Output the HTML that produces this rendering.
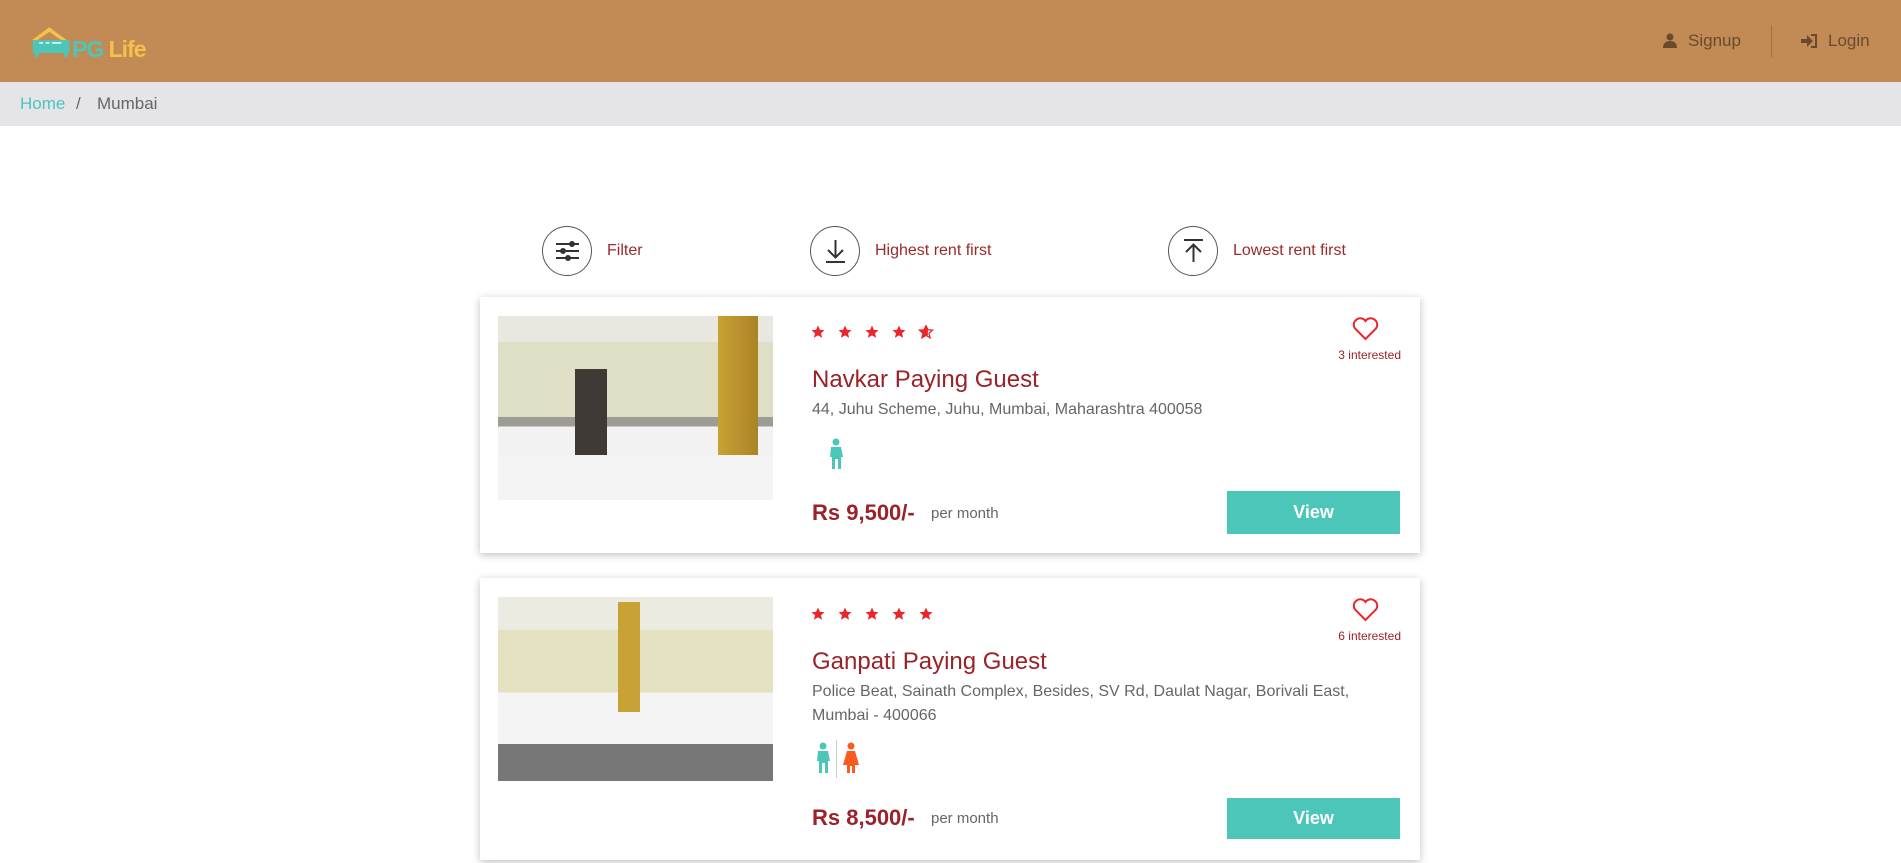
<!DOCTYPE html>
<html><head><meta charset="utf-8">
<style>
*{box-sizing:border-box;margin:0;padding:0}
body{width:1901px;height:863px;overflow:hidden;background:#fff;font-family:"Liberation Sans",sans-serif;position:relative}
.abs{position:absolute}
.hdr{left:0;top:0;width:1901px;height:82px;background:#c28a55}
.bc{left:0;top:82px;width:1901px;height:44px;background:#e5e4e9;font-size:17px;color:#666}
.nav{font-size:17px;color:#6a4a2e}
.sort{font-size:16px;color:#9a2a2a}
.circ{width:50px;height:50px;border:1px solid #555;border-radius:50%}
.card{left:480px;width:940px;background:#fff;box-shadow:0 2px 8px rgba(0,0,0,.25)}
.title{font-size:24px;color:#9a2228}
.addr{font-size:16px;color:#666;line-height:24px}
.price{font-size:22px;font-weight:bold;color:#9a2228}
.pm{font-size:15px;color:#666}
.btn{background:#4bc6b9;color:#fff;font-weight:bold;font-size:18px;text-align:center}
.int{font-size:12px;color:#9a2228}
</style></head><body>
<svg width="0" height="0" style="position:absolute"><defs>
<path id="st" d="M7 0.5l1.9 4.3 4.6.4-3.5 3 1.1 4.6L7 10.4 2.9 12.8 4 8.2.5 5.2l4.6-.4z"/>
</defs></svg>
<div class="abs hdr"></div>
<svg class="abs" style="left:30px;top:24px" width="46" height="36" viewBox="0 0 50 36">
<path d="M2 16 L21 2 L40 16 L34 16 L21 7 L8 16Z" fill="#f6c04a"/>
<rect x="3" y="16" width="40" height="14" rx="2" fill="#4bc6b9"/>
<rect x="5" y="28" width="4" height="6" fill="#4bc6b9"/><rect x="37" y="28" width="4" height="6" fill="#4bc6b9"/>
<path d="M10 19h4M17 19h4M24 19h10" stroke="#fff" stroke-width="1.5"/>
</svg>
<div class="abs" style="left:72px;top:36px;font-size:23px;font-weight:bold;letter-spacing:-1px"><span style="color:#4bc6b9">PG</span> <span style="color:#f6c04a">Life</span></div>
<svg class="abs" style="left:1663px;top:33px" width="14" height="15" viewBox="0 0 14 15"><circle cx="7" cy="4" r="3.5" fill="#6a4a2e"/><path d="M0 15c0-5 3-7 7-7s7 2 7 7z" fill="#6a4a2e"/></svg>
<div class="abs nav" style="left:1688px;top:31px">Signup</div>
<div class="abs" style="left:1771px;top:25px;width:1px;height:32px;background:#9c7048"></div>
<svg class="abs" style="left:1801px;top:34px" width="16" height="14" viewBox="0 0 16 14"><path d="M0 5h6V1l6 6-6 6V9H0z" fill="#6a4a2e"/><path d="M10 1h5v12h-5" stroke="#6a4a2e" stroke-width="2" fill="none"/></svg>
<div class="abs nav" style="left:1828px;top:31px">Login</div>
<div class="abs bc"><span class="abs" style="left:20px;top:12px;color:#4bc6b9">Home</span><span class="abs" style="left:76px;top:12px">/</span><span class="abs" style="left:97px;top:12px">Mumbai</span></div>

<div class="abs circ" style="left:542px;top:226px"></div>
<svg class="abs" style="left:555px;top:239px" width="25" height="24" viewBox="0 0 25 24" stroke="#333" stroke-width="2"><path d="M1 5h23M1 12h23M1 19h23"/><circle cx="17" cy="5" r="2" fill="#333"/><circle cx="8" cy="12" r="2" fill="#333"/><circle cx="13" cy="19" r="2" fill="#333"/></svg>
<div class="abs sort" style="left:607px;top:242px">Filter</div>
<div class="abs circ" style="left:810px;top:226px"></div>
<svg class="abs" style="left:823px;top:238px" width="25" height="26" viewBox="0 0 25 26" stroke="#333" stroke-width="2" fill="none"><path d="M12.5 2v17M5 12l7.5 7.5L20 12M3 24h19"/></svg>
<div class="abs sort" style="left:875px;top:242px">Highest rent first</div>
<div class="abs circ" style="left:1168px;top:226px"></div>
<svg class="abs" style="left:1181px;top:238px" width="25" height="26" viewBox="0 0 25 26" stroke="#333" stroke-width="2" fill="none"><path d="M3 2h19M12.5 7v17M5 14l7.5-7.5L20 14"/></svg>
<div class="abs sort" style="left:1233px;top:242px">Lowest rent first</div>

<!-- card 1 -->
<div class="abs card" style="top:297px;height:256px"></div>
<div class="abs" style="left:498px;top:316px;width:275px;height:184px;background:linear-gradient(180deg,#e8e8e0 0 14%,#dedfc4 14% 55%,#9c9c94 55% 60%,#f2f2f2 60%);"></div>
<div class="abs" style="left:575px;top:369px;width:32px;height:100px;background:#3f3a36"></div>
<div class="abs" style="left:718px;top:316px;width:40px;height:180px;background:linear-gradient(90deg,#c8a234,#a98424)"></div>
<div class="abs" style="left:498px;top:455px;width:275px;height:45px;background:#f4f4f4"></div>
<svg class="abs" style="left:811px;top:325px" width="130" height="14" fill="#e8262b"><use href="#st"/><use href="#st" x="27"/><use href="#st" x="54"/><use href="#st" x="81"/><use href="#st" x="108" fill="none" stroke="#e8262b" stroke-width="1.3"/><path d="M115 0.5l1.9 4.3V10.4L115 10.4 110.9 12.8 112 8.2 108.5 5.2 113.1 4.8z" fill="#e8262b"/></svg>
<svg class="abs" style="left:1352px;top:317px" width="27" height="24" viewBox="0 0 27 24"><path d="M13.5 22L3 11.5A6 6 0 0 1 13.5 4 6 6 0 0 1 24 11.5z" fill="none" stroke="#e8262b" stroke-width="2"/></svg>
<div class="abs int" style="left:1331px;top:348px;width:70px;text-align:right">3 interested</div>
<div class="abs title" style="left:812px;top:366px">Navkar Paying Guest</div>
<div class="abs addr" style="left:812px;top:398px">44, Juhu Scheme, Juhu, Mumbai, Maharashtra 400058</div>
<svg class="abs" style="left:828px;top:438px" width="16" height="32" viewBox="0 0 16 32" fill="#4bc6b9"><circle cx="8" cy="4" r="3.5"/><path d="M3 9h10l2 10h-2v12h-3V21H7v10H4V19H2z"/></svg>
<div class="abs price" style="left:812px;top:500px">Rs 9,500/-</div>
<div class="abs pm" style="left:931px;top:505px">per month</div>
<div class="abs btn" style="left:1227px;top:491px;width:173px;height:43px;line-height:43px">View</div>

<!-- card 2 -->
<div class="abs card" style="top:578px;height:282px"></div>
<div class="abs" style="left:498px;top:597px;width:275px;height:184px;background:linear-gradient(180deg,#ecebe2 0 18%,#e4e2c0 18% 52%,#f4f4f4 52% 80%,#777 80%);"></div>
<div class="abs" style="left:618px;top:602px;width:22px;height:110px;background:#c8a234"></div>
<svg class="abs" style="left:811px;top:607px" width="130" height="14" fill="#e8262b"><use href="#st"/><use href="#st" x="27"/><use href="#st" x="54"/><use href="#st" x="81"/><use href="#st" x="108"/></svg>
<svg class="abs" style="left:1352px;top:598px" width="27" height="24" viewBox="0 0 27 24"><path d="M13.5 22L3 11.5A6 6 0 0 1 13.5 4 6 6 0 0 1 24 11.5z" fill="none" stroke="#e8262b" stroke-width="2"/></svg>
<div class="abs int" style="left:1331px;top:629px;width:70px;text-align:right">6 interested</div>
<div class="abs title" style="left:812px;top:648px">Ganpati Paying Guest</div>
<div class="abs addr" style="left:812px;top:680px">Police Beat, Sainath Complex, Besides, SV Rd, Daulat Nagar, Borivali East,<br>Mumbai - 400066</div>
<svg class="abs" style="left:815px;top:742px" width="16" height="32" viewBox="0 0 16 32" fill="#4bc6b9"><circle cx="8" cy="4" r="3.5"/><path d="M3 9h10l2 10h-2v12h-3V21H7v10H4V19H2z"/></svg>
<div class="abs" style="left:836px;top:740px;width:1px;height:38px;background:#ccc"></div>
<svg class="abs" style="left:842px;top:742px" width="18" height="32" viewBox="0 0 18 32" fill="#fb5a1e"><circle cx="9" cy="4" r="3.5"/><path d="M5 9h8l4 14h-4v8h-3v-7H8v7H5v-8H1z"/></svg>
<div class="abs price" style="left:812px;top:805px">Rs 8,500/-</div>
<div class="abs pm" style="left:931px;top:810px">per month</div>
<div class="abs btn" style="left:1227px;top:798px;width:173px;height:41px;line-height:41px">View</div>
</body></html>
